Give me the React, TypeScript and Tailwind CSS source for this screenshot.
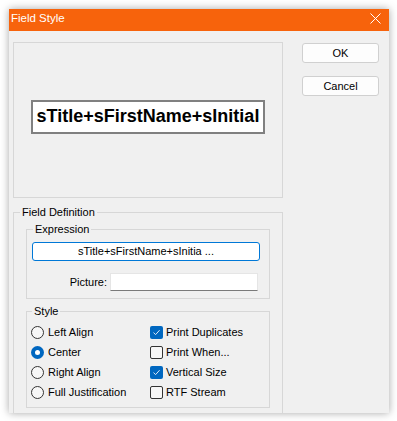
import React from "react";

const font = { fontFamily: '"Liberation Sans", Arial, sans-serif' };

function Radio({ label, checked }: { label: string; checked?: boolean }) {
  return (
    <div className="flex h-[20px] items-center gap-[4px]">
      {checked ? (
        <span className="flex h-[13px] w-[13px] items-center justify-center rounded-full bg-[#0067c0]">
          <span className="h-[5px] w-[5px] rounded-full bg-white" />
        </span>
      ) : (
        <span className="h-[13px] w-[13px] rounded-full border border-[#333333] bg-[#f7f7f7]" />
      )}
      <span>{label}</span>
    </div>
  );
}

function Check({ label, checked }: { label: string; checked?: boolean }) {
  return (
    <div className="flex h-[20px] items-center gap-[3px]">
      {checked ? (
        <span className="flex h-[13px] w-[13px] items-center justify-center rounded-[2px] bg-[#0067c0]">
          <svg width="9" height="9" viewBox="0 0 9 9">
            <path d="M1.5 4.6 L3.6 6.6 L7.6 2.2" fill="none" stroke="#dbe8f6" strokeWidth="1" />
          </svg>
        </span>
      ) : (
        <span className="h-[13px] w-[13px] rounded-[2px] border border-[#333333] bg-[#f7f7f7]" />
      )}
      <span>{label}</span>
    </div>
  );
}

export default function App() {
  return (
    <div className="h-[421px] w-[397px] bg-white pl-[9px] pt-[9px]" style={font}>
      <div className="h-[404px] w-[380px] overflow-hidden bg-[#f0f0f0] text-[11px] text-black shadow-[0_0_8px_rgba(0,0,0,0.35)]">
        {/* title bar */}
        <div className="flex h-[22px] items-center justify-between bg-[#f7630c] pl-[2px] pr-[8px] text-white">
          <span className="-mt-[3px] text-[11.5px]">Field Style</span>
          <svg width="11" height="11" viewBox="0 0 11 11" className="-mt-[4px]">
            <path d="M0.5 0.5 L10.5 10.5 M10.5 0.5 L0.5 10.5" stroke="white" strokeWidth="1" />
          </svg>
        </div>

        <div className="flex pl-[4px]">
          {/* left column */}
          <div className="w-[270px] pt-[11px]">
            <div className="flex h-[156px] items-center justify-center border border-[#d7d7d7] pb-[7px]">
              <div className="flex h-[34px] w-[234px] items-center justify-center overflow-hidden whitespace-nowrap border-2 border-[#808080] bg-white text-[18px] font-bold">
                sTitle+sFirstName+sInitial
              </div>
            </div>

            <fieldset className="mt-[8px] border border-[#d7d7d7] px-[12px] pb-[12px]">
              <legend className="-ml-[6px] px-[2px] leading-[13px]">Field Definition</legend>

              <fieldset className="mt-[4px] border border-[#d7d7d7] pb-[7px] pl-[5px] pr-[9px]">
                <legend className="ml-[1px] px-[2px] leading-[13px]">Expression</legend>
                <div className="mt-[6px] flex h-[19px] items-center justify-center rounded-[3px] border border-[#0078d7] bg-white">
                  sTitle+sFirstName+sInitia ...
                </div>
                <div className="mt-[12px] flex items-center justify-end gap-[3px] pr-[2px]">
                  <span>Picture:</span>
                  <div className="h-[18px] w-[148px] border border-[#e5e5e5] border-b-[#7a7a7a] bg-white" />
                </div>
              </fieldset>

              <fieldset className="mt-[6px] border border-[#d7d7d7] pb-[5px] pl-[4px]">
                <legend className="ml-[1px] px-[2px] leading-[13px]">Style</legend>
                <div className="mt-[4px] flex">
                  <div className="w-[119px]">
                    <Radio label="Left Align" />
                    <Radio label="Center" checked />
                    <Radio label="Right Align" />
                    <Radio label="Full Justification" />
                  </div>
                  <div>
                    <Check label="Print Duplicates" checked />
                    <Check label="Print When..." />
                    <Check label="Vertical Size" checked />
                    <Check label="RTF Stream" />
                  </div>
                </div>
              </fieldset>
            </fieldset>
          </div>

          {/* buttons */}
          <div className="ml-[19px] flex flex-col gap-[13px] pt-[12px]">
            <button className="h-[20px] w-[77px] rounded-[3px] border border-[#d0d0d0] bg-[#fdfdfd] text-[11px]">
              OK
            </button>
            <button className="h-[20px] w-[77px] rounded-[3px] border border-[#d0d0d0] bg-[#fdfdfd] text-[11px]">
              Cancel
            </button>
          </div>
        </div>
      </div>
    </div>
  );
}
